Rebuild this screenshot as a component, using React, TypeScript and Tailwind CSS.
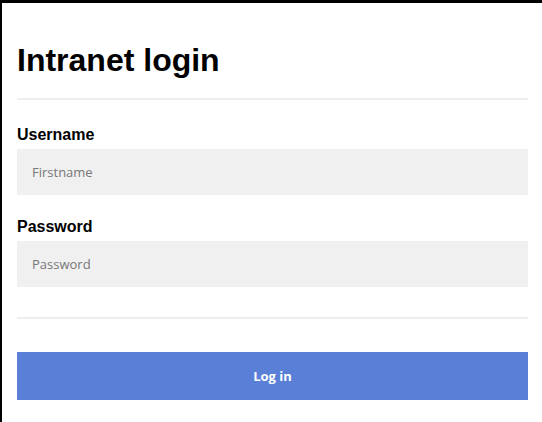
const fieldClass =
  'block w-full h-[46px] bg-[#f0f0f0] px-[15px] text-[13px] text-[#333] placeholder:text-[#777] outline-none font-["Open_Sans",sans-serif]';

const App = () => {
  return (
    <div className="min-h-screen bg-white border-t-[3px] border-l-2 border-black pl-[15px] pr-[14px] font-['Liberation_Sans',Arial,sans-serif] text-black">
      <h1 className="pt-[37px] text-[32px] leading-[40px] font-bold">Intranet login</h1>
      <div className="mt-[18px] h-[2px] bg-[#eeeeee]"></div>

      <form onSubmit={(e) => e.preventDefault()}>
        <label className="block mt-[25px] text-[16px] leading-[20px] font-bold" htmlFor="username">
          Username
        </label>
        <input id="username" type="text" placeholder="Firstname" className={`mt-[4px] ${fieldClass}`} />

        <label className="block mt-[22px] text-[16px] leading-[20px] font-bold" htmlFor="password">
          Password
        </label>
        <input id="password" type="password" placeholder="Password" className={`mt-[4px] ${fieldClass}`} />

        <div className="mt-[30px] h-[2px] bg-[#eeeeee]"></div>

        <button
          type="submit"
          className="mt-[33px] block w-full h-[48px] pt-[2px] bg-[#5a7fd6] text-white text-[13px] font-bold font-['Open_Sans',sans-serif]"
        >
          Log in
        </button>
      </form>
    </div>
  );
};

export default App;
